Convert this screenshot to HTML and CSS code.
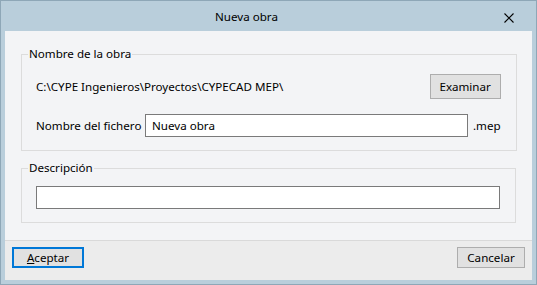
FILE: index.html
```html
<!DOCTYPE html>
<html lang="es">
<head>
    <meta charset="UTF-8">
    <title>Nueva obra</title>
    <link rel="stylesheet" href="styles.css">
</head>
<body>
    <div class="window">
        <div class="titlebar">
            <span class="title">Nueva obra</span>
            <button class="close-btn" aria-label="Cerrar">
                <svg width="10" height="10" viewBox="0 0 10 10">
                    <path d="M0.5 0.5 L9.5 9.5 M9.5 0.5 L0.5 9.5" stroke="#000" stroke-width="1.1" fill="none"/>
                </svg>
            </button>
        </div>
        <div class="client">
            <div class="content">
                <fieldset class="group">
                    <legend>Nombre de la obra</legend>
                    <div class="row path-row">
                        <span class="path">C:\CYPE Ingenieros\Proyectos\CYPECAD MEP\</span>
                        <button class="btn">Examinar</button>
                    </div>
                    <div class="row file-row">
                        <label class="file-label">Nombre del fichero</label>
                        <input class="text-input file-input" type="text" value="Nueva obra">
                        <span class="ext">.mep</span>
                    </div>
                </fieldset>
                <fieldset class="group desc-group">
                    <legend>Descripción</legend>
                    <input class="text-input desc-input" type="text">
                </fieldset>
            </div>
            <div class="footer">
                <button class="btn btn-default"><u>A</u>ceptar</button>
                <button class="btn btn-cancel">Cancelar</button>
            </div>
        </div>
    </div>
</body>
</html>
```

FILE: styles.css
```css
* {
    margin: 0;
    padding: 0;
    box-sizing: border-box;
}

body {
    font-family: 'Noto Sans', 'Open Sans', sans-serif;
    font-size: 11.6px;
    color: #000;
    background-color: #fff;
}

.window {
    width: 537px;
    height: 285px;
    background-color: #b9cedb;
    border: 1px solid #8ea7b7;
    display: flex;
    flex-direction: column;
}

.titlebar {
    height: 30px;
    position: relative;
    display: flex;
    align-items: center;
    padding-left: 214px;
}

.title {
    line-height: 16px;
    padding-top: 1px;
}

.close-btn {
    position: absolute;
    top: 12px;
    right: 22px;
    width: 10px;
    height: 10px;
    border: none;
    background: none;
    display: flex;
}

.client {
    margin: 0 4px;
    height: 249px;
    display: flex;
    flex-direction: column;
}

.content {
    background-color: #f3f4f6;
    height: 209px;
    padding: 15px 16px 0;
}

.group {
    border: 1px solid #dcdcdc;
    padding: 12px 15px 13px 14px;
}

.group legend {
    line-height: 16px;
    margin-left: -8px;
    padding: 0 1px;
}

.row {
    display: flex;
    align-items: center;
}

.path-row {
    height: 25px;
    justify-content: space-between;
}

.file-row {
    height: 23px;
    margin-top: 15px;
}

.file-label {
    width: 109px;
    white-space: nowrap;
    flex-shrink: 0;
}

.ext {
    margin-left: 5px;
}

.text-input {
    height: 23px;
    border: 1px solid #7a7a7a;
    background-color: #fff;
    font-family: inherit;
    font-size: 11.6px;
    padding: 0 6px;
    outline: none;
}

.file-input {
    width: 323px;
}

.desc-group {
    margin-top: 9px;
    padding-top: 10px;
}

.desc-input {
    width: 100%;
    display: block;
}

.btn {
    height: 25px;
    width: 71px;
    background-color: #e1e1e1;
    border: 1px solid #adadad;
    font-family: inherit;
    font-size: 11.6px;
    color: #000;
}

.footer {
    flex: 1;
    background-color: #ececec;
    border-top: 1px solid #d9d9d9;
    display: flex;
    justify-content: space-between;
    align-items: flex-start;
    padding: 6px 7px 0;
}

.footer .btn {
    height: 21px;
}

.btn-default {
    width: 72px;
    border: 2px solid #0078d7;
}

.btn-cancel {
    width: 68px;
}
```
